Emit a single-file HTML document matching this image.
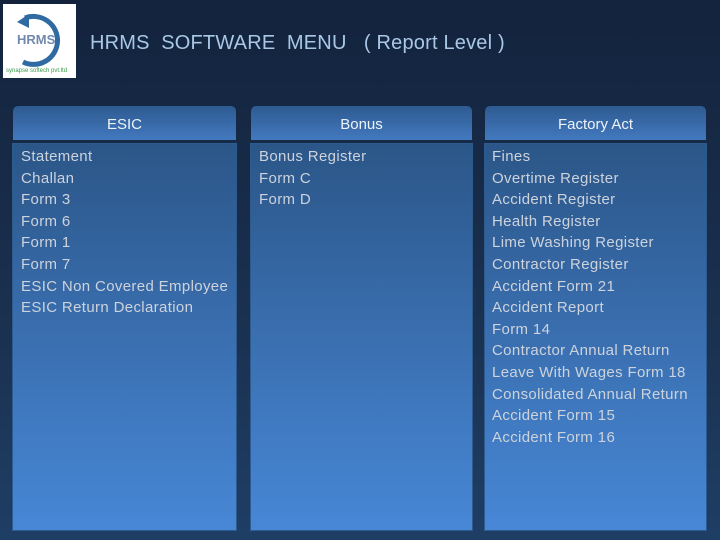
<!DOCTYPE html><html><head><style>
body{margin:0;width:720px;height:540px;overflow:hidden;background:linear-gradient(#13233d,#1a3150 60%,#1f3e66);font-family:"Liberation Sans",sans-serif;position:relative}
.logo{position:absolute;left:3px;top:4px;width:73px;height:74px;background:#fff}
.title{position:absolute;left:90px;top:32px;color:#a9c8e6;font-size:20px;letter-spacing:.2px}
.h{position:absolute;top:106px;height:34px;border-radius:5px 5px 0 0;background:linear-gradient(#2e5a90,#4279bf);color:#eef3f8;font-size:15px;text-align:center;line-height:38px}
.b{position:absolute;top:144px;height:386px;background:linear-gradient(#2b5688,#3a6fb0 50%,#4787d6);box-shadow:0 0 0 1px #2d5a8f;color:#cdd3dc;font-size:15px;letter-spacing:.35px;line-height:21.6px;padding:2px 0 0 8px;box-sizing:border-box}
</style></head><body>
<div class="logo"><svg width="73" height="74"><path d="M22 14 A24 24 0 1 1 20 58" fill="none" stroke="#2f6aa3" stroke-width="5"/><path d="M14 18 l12 -8 l0 14z" fill="#2f6aa3"/><text x="14" y="40" font-size="13" font-weight="bold" fill="#7189ad" font-family="Liberation Sans">HRMS</text><text x="3" y="68" font-size="6" fill="#3a9a4a" font-family="Liberation Sans">synapse softech pvt.ltd</text></svg></div>
<div class="title">HRMS&nbsp; SOFTWARE&nbsp; MENU&nbsp;&nbsp; ( Report Level )</div>
<div class="h" style="left:13px;width:223px">ESIC</div>
<div class="h" style="left:251px;width:221px">Bonus</div>
<div class="h" style="left:485px;width:221px">Factory Act</div>
<div class="b" style="left:13px;width:223px">Statement<br>Challan<br>Form 3<br>Form 6<br>Form 1<br>Form 7<br>ESIC Non Covered Employee<br>ESIC Return Declaration</div>
<div class="b" style="left:251px;width:221px">Bonus Register<br>Form C<br>Form D</div>
<div class="b" style="left:485px;width:221px;padding-left:7px">Fines<br>Overtime Register<br>Accident Register<br>Health Register<br>Lime Washing Register<br>Contractor Register<br>Accident Form 21<br>Accident Report<br>Form 14<br>Contractor Annual Return<br>Leave With Wages Form 18<br>Consolidated Annual Return<br>Accident Form 15<br>Accident Form 16</div>
</body></html>
